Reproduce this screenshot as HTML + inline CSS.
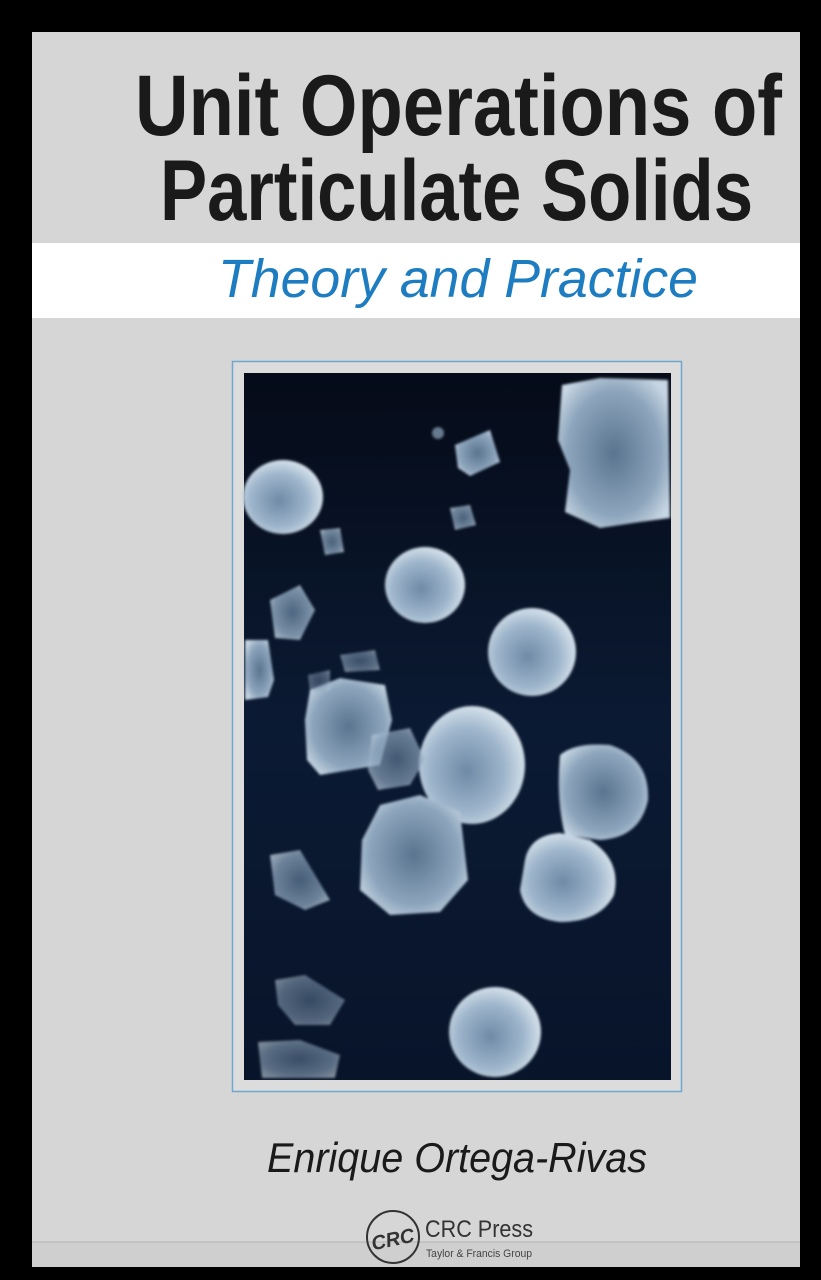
<!DOCTYPE html>
<html><head><meta charset="utf-8"><style>
html,body{margin:0;padding:0;background:#000;}
svg{display:block}
</style></head><body>
<svg width="821" height="1280" viewBox="0 0 821 1280" xmlns="http://www.w3.org/2000/svg">
<defs>
<linearGradient id="bg" x1="0" y1="0" x2="0" y2="1">
<stop offset="0" stop-color="#050b18"/><stop offset="0.5" stop-color="#0b1a33"/><stop offset="1" stop-color="#08142a"/>
</linearGradient>
<radialGradient id="pb" cx="0.45" cy="0.55" r="0.6">
<stop offset="0" stop-color="#6f8aa6"/><stop offset="0.6" stop-color="#9fb6cc"/><stop offset="0.9" stop-color="#d0dde8"/><stop offset="1" stop-color="#e4ecf3"/>
</radialGradient>
<radialGradient id="pc" cx="0.5" cy="0.5" r="0.6">
<stop offset="0" stop-color="#5a748f"/><stop offset="0.7" stop-color="#8ea6bd"/><stop offset="1" stop-color="#c7d6e3"/>
</radialGradient>
<filter id="bl"><feGaussianBlur stdDeviation="1.2"/></filter>
<filter id="bl2"><feGaussianBlur stdDeviation="2.5"/></filter>
</defs>
<rect width="821" height="1280" fill="#000"/>
<rect x="32" y="32" width="768" height="1235" fill="#d6d6d6"/>
<rect x="32" y="1242" width="768" height="25" fill="#cfcfcf"/>
<line x1="32" y1="1242" x2="800" y2="1242" stroke="#bdbdbd" stroke-width="1.5"/>
<rect x="32" y="243" width="768" height="75" fill="#fff"/>
<text x="135" y="135" font-family="Liberation Sans, sans-serif" font-weight="bold" font-size="86" fill="#1a1a1a" textLength="647" lengthAdjust="spacingAndGlyphs">Unit Operations of</text>
<text x="160" y="220" font-family="Liberation Sans, sans-serif" font-weight="bold" font-size="86" fill="#1a1a1a" textLength="593" lengthAdjust="spacingAndGlyphs">Particulate Solids</text>
<text x="218" y="297" font-family="Liberation Sans, sans-serif" font-style="italic" font-size="54" fill="#1d7dc0" textLength="480" lengthAdjust="spacingAndGlyphs">Theory and Practice</text>

<rect x="232.5" y="361.5" width="449" height="730" fill="#dcdcdc" stroke="#6fa7cf" stroke-width="1.5"/>
<rect x="244" y="373" width="427" height="707" fill="url(#bg)"/>
<g filter="url(#bl)">
<path d="M562,385 L600,378 L668,380 L670,518 L640,522 L600,528 L565,512 L570,470 L558,440 Z" fill="url(#pc)"/>
<path d="M455,445 L490,430 L500,462 L470,476 L458,468 Z" fill="url(#pc)"/>
<ellipse cx="283" cy="497" rx="40" ry="37" fill="url(#pb)"/>
<ellipse cx="425" cy="585" rx="40" ry="38" fill="url(#pb)"/>
<ellipse cx="532" cy="652" rx="44" ry="44" fill="url(#pb)"/>
<ellipse cx="472" cy="765" rx="53" ry="59" fill="url(#pb)"/>
<path d="M525,860 Q530,835 560,833 L590,840 Q622,860 614,895 Q600,922 560,922 Q525,918 520,890 Z" fill="url(#pb)"/>
<path d="M560,755 Q575,742 610,745 Q650,758 648,800 Q640,838 600,840 L565,835 Q556,800 560,755 Z" fill="url(#pc)"/>
<ellipse cx="495" cy="1032" rx="46" ry="45" fill="url(#pb)"/>
<path d="M310,690 L340,678 L385,685 L392,720 L380,765 L320,775 L307,760 L305,720 Z" fill="url(#pc)"/>
<path d="M380,805 L420,795 L460,812 L468,880 L440,912 L390,915 L360,890 L362,840 Z" fill="url(#pc)"/>
<path d="M245,640 L268,640 L274,680 L268,697 L245,700 Z" fill="url(#pc)"/>
<path d="M270,600 L300,585 L315,610 L300,640 L275,638 Z" fill="url(#pc)" opacity="0.85"/>
<path d="M372,735 L410,728 L425,760 L410,785 L378,790 L368,770 Z" fill="url(#pc)" opacity="0.7"/>
<path d="M270,855 L300,850 L330,900 L305,910 L275,895 Z" fill="url(#pc)" opacity="0.75"/>
<path d="M275,980 L305,975 L345,1000 L330,1025 L295,1025 L278,1005 Z" fill="url(#pc)" opacity="0.55"/>
<path d="M258,1042 L300,1040 L340,1055 L335,1078 L262,1078 Z" fill="url(#pc)" opacity="0.6"/>
<path d="M320,530 L340,528 L344,552 L325,555 Z" fill="url(#pc)" opacity="0.8"/>
<path d="M450,508 L470,505 L476,525 L455,530 Z" fill="url(#pc)" opacity="0.8"/>
<circle cx="438" cy="433" r="6" fill="#8fa6bd" opacity="0.7"/>
<path d="M340,655 L375,650 L380,670 L345,672 Z" fill="url(#pc)" opacity="0.6"/>
<path d="M308,675 L330,670 L330,690 L310,692 Z" fill="url(#pc)" opacity="0.5"/>
</g>

<text x="267" y="1172" font-family="Liberation Sans, sans-serif" font-style="italic" font-size="42" fill="#1a1a1a" textLength="380" lengthAdjust="spacingAndGlyphs">Enrique Ortega-Rivas</text>
<circle cx="393" cy="1237" r="26" fill="none" stroke="#333" stroke-width="2"/>
<text x="393" y="1246" text-anchor="middle" font-family="Liberation Sans, sans-serif" font-style="italic" font-weight="bold" font-size="20" fill="#333" transform="rotate(-12 393 1240)">CRC</text>
<text x="425" y="1237" font-family="Liberation Sans, sans-serif" font-size="24" fill="#333" textLength="108" lengthAdjust="spacingAndGlyphs">CRC Press</text>
<text x="426" y="1257" font-family="Liberation Sans, sans-serif" font-size="11" fill="#444" textLength="106" lengthAdjust="spacingAndGlyphs">Taylor &amp; Francis Group</text>
</svg>
</body></html>
